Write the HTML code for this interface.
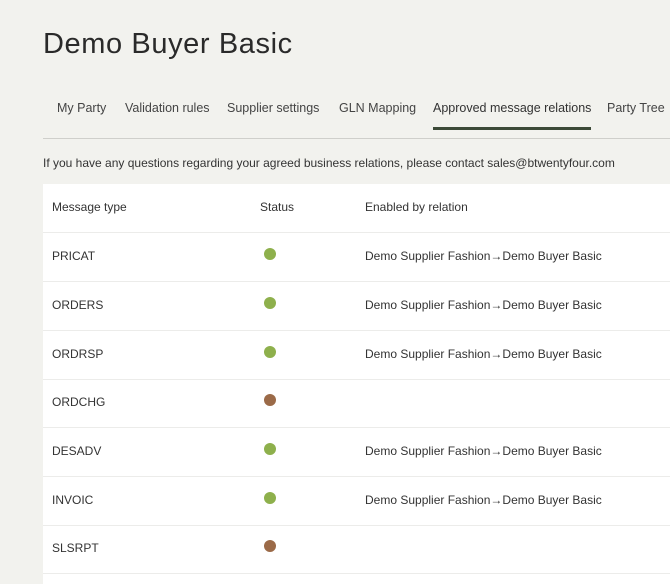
<!DOCTYPE html>
<html><head><style>
body{margin:0;width:670px;height:580px;overflow:hidden;background:#f2f2ee;font-family:"Liberation Sans",sans-serif;color:#333;position:relative}
h1{position:absolute;left:43px;top:28px;margin:0;font-weight:400;font-size:29px;color:#2a2a2a;letter-spacing:0.6px}
.tabs{position:absolute;left:43px;top:101px;right:0;height:37px;border-bottom:1px solid #cfcfcb;font-size:12.5px;color:#444}
.tabs span{position:absolute;top:0}
.tabs .act{color:#333;border-bottom:3px solid #3c4a38;padding-bottom:12px}
.info{position:absolute;left:43px;top:156px;font-size:12px;color:#333}
.tbl{position:absolute;left:43px;top:184px;width:627px;height:400px;background:#fff}
.row{position:absolute;left:0;right:0;height:48px;border-bottom:1px solid #ececea;font-size:12px;color:#333}
.row span{position:absolute;top:16px}
.c1{left:9px}.c2{left:217px}.c3{left:322px}
.dot{position:absolute;left:221px;top:15px;width:12px;height:12px;border-radius:50%;background:#8eb04c}
.r{background:#9b6a48}
</style></head><body>
<h1>Demo Buyer Basic</h1>
<div class="tabs">
<span style="left:14px">My Party</span>
<span style="left:82px">Validation rules</span>
<span style="left:184px">Supplier settings</span>
<span style="left:296px">GLN Mapping</span>
<span class="act" style="left:390px">Approved message relations</span>
<span style="left:564px">Party Tree</span>
</div>
<div class="info">If you have any questions regarding your agreed business relations, please contact sales@btwentyfour.com</div>
<div class="tbl">
<div class="row" style="top:0"><span class="c1">Message type</span><span class="c2">Status</span><span class="c3">Enabled by relation</span></div>
<div class="row" style="top:49px"><span class="c1">PRICAT</span><div class="dot"></div><span class="c3">Demo Supplier Fashion→Demo Buyer Basic</span></div>
<div class="row" style="top:98px"><span class="c1">ORDERS</span><div class="dot"></div><span class="c3">Demo Supplier Fashion→Demo Buyer Basic</span></div>
<div class="row" style="top:147px"><span class="c1">ORDRSP</span><div class="dot"></div><span class="c3">Demo Supplier Fashion→Demo Buyer Basic</span></div>
<div class="row" style="top:195px"><span class="c1">ORDCHG</span><div class="dot r"></div></div>
<div class="row" style="top:244px"><span class="c1">DESADV</span><div class="dot"></div><span class="c3">Demo Supplier Fashion→Demo Buyer Basic</span></div>
<div class="row" style="top:293px"><span class="c1">INVOIC</span><div class="dot"></div><span class="c3">Demo Supplier Fashion→Demo Buyer Basic</span></div>
<div class="row" style="top:341px"><span class="c1">SLSRPT</span><div class="dot r"></div></div>
</div>
</body></html>
